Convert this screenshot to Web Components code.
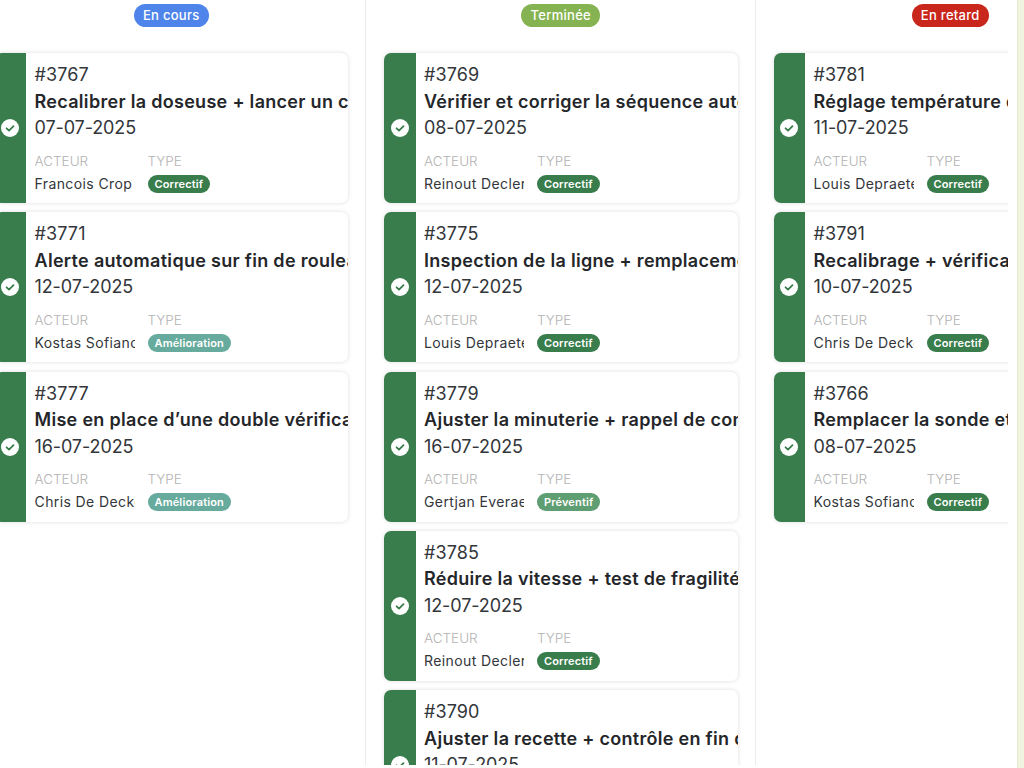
<!DOCTYPE html>
<html lang="fr">
<head>
<meta charset="utf-8">
<title>Tableau</title>
<style>
  html, body { margin: 0; padding: 0; background: #fff; }
  body { font-family: "Inter", "Liberation Sans", sans-serif; height: 768px; overflow: hidden; }
</style>
</head>
<body>
<template id="cardTpl">
  <style>
    :host { display: flex; height: 150px; background: #fff; border-radius: 7px; overflow: hidden; box-shadow: 0 0 4px rgba(0,0,0,.14); flex: none; }
    .band { flex: none; width: 31.5px; background: #387d4b; display: flex; align-items: center; justify-content: center; }
    .band svg { width: 18px; height: 18px; display: block; }
    .body { flex: 1; min-width: 0; padding: 9px 0 0 8.5px; color: #33363a; overflow: hidden; }
    .num, .date { font-size: 18px; line-height: 26.5px; white-space: nowrap; }
    .num { letter-spacing: .1px; }
    .date { letter-spacing: -.1px; }
    .title { font-size: 18px; line-height: 26.5px; font-weight: 600; white-space: nowrap; color: #24262a; letter-spacing: .3px; }
    .meta { display: flex; margin-top: 10px; }
    .col { flex: none; }
    .col:first-child { width: 100px; margin-right: 13px; overflow: hidden; }
    .lab { font-size: 13.5px; line-height: 19px; color: #b3b3b3; font-weight: 300; }
    .val { font-size: 14px; line-height: 24px; margin-top: 1px; white-space: nowrap; color: #33363a; letter-spacing: .4px; }
    .tag { display: inline-block; margin-top: 4px; padding: 0 7px; height: 18px; line-height: 18px; border-radius: 9px; color: #fff; font-size: 11px; font-weight: 600; letter-spacing: .15px; background: var(--tag, #387d4b); }
  </style>
  <div class="band">
    <svg viewBox="0 0 18 18"><circle cx="9" cy="9" r="9" fill="#fff"/><path d="M5.6 9.3l2.4 2.3 4.5-4.5" fill="none" stroke="#387d4b" stroke-width="1.8" stroke-linecap="round" stroke-linejoin="round"/></svg>
  </div>
  <div class="body">
    <div class="num"></div>
    <div class="title"></div>
    <div class="date"></div>
    <div class="meta">
      <div class="col"><div class="lab">ACTEUR</div><div class="val"></div></div>
      <div class="col"><div class="lab">TYPE</div><div class="tag"></div></div>
    </div>
  </div>
</template>

<kanban-board>
  <kanban-column label="En cours" color="#4f84ea">
    <task-card num="3767" title="Recalibrer la doseuse + lancer un contrôle" date="07-07-2025" actor="Francois Crop" type="Correctif"></task-card>
    <task-card num="3771" title="Alerte automatique sur fin de rouleau" date="12-07-2025" actor="Kostas Sofianos" type="Amélioration"></task-card>
    <task-card num="3777" title="Mise en place d’une double vérification" date="16-07-2025" actor="Chris De Decker" type="Amélioration"></task-card>
  </kanban-column>
  <kanban-column label="Terminée" color="#86b351">
    <task-card num="3769" title="Vérifier et corriger la séquence automatique" date="08-07-2025" actor="Reinout Declercq" type="Correctif"></task-card>
    <task-card num="3775" title="Inspection de la ligne + remplacement" date="12-07-2025" actor="Louis Depraetere" type="Correctif"></task-card>
    <task-card num="3779" title="Ajuster la minuterie + rappel de consigne" date="16-07-2025" actor="Gertjan Everaert" type="Préventif"></task-card>
    <task-card num="3785" title="Réduire la vitesse + test de fragilité" date="12-07-2025" actor="Reinout Declercq" type="Correctif"></task-card>
    <task-card num="3790" title="Ajuster la recette + contrôle en fin de cycle" date="11-07-2025" actor="Louis Depraetere" type="Correctif"></task-card>
  </kanban-column>
  <kanban-column label="En retard" color="#c9261c">
    <task-card num="3781" title="Réglage température du four principal" date="11-07-2025" actor="Louis Depraetere" type="Correctif"></task-card>
    <task-card num="3791" title="Recalibrage + vérification du capteur" date="10-07-2025" actor="Chris De Decker" type="Correctif"></task-card>
    <task-card num="3766" title="Remplacer la sonde et vérifier le signal" date="08-07-2025" actor="Kostas Sofianos" type="Correctif"></task-card>
  </kanban-column>
</kanban-board>

<script>
  class KanbanBoard extends HTMLElement {
    constructor() {
      super();
      this.attachShadow({mode: "open"}).innerHTML = `
        <style>
          :host { display: flex; height: 768px; background: #fff; }
          .view { width: 1008px; height: 765px; overflow: hidden; flex: none; }
          .cols { display: flex; margin-left: -23.2px; width: max-content; height: 100%; }
          .gap { width: 9px; flex: none; }
          .strip { flex: 1; background: #f0f4df; border-left: 1px solid #e6ebd0; }
        </style>
        <div class="view"><div class="cols"><slot></slot></div></div>
        <div class="gap"></div>
        <div class="strip"></div>`;
    }
  }

  class KanbanColumn extends HTMLElement {
    constructor() {
      super();
      this.attachShadow({mode: "open"}).innerHTML = `
        <style>
          :host { display: block; width: 389.5px; box-sizing: border-box; border-right: 1px solid #ececec; padding: 4px 17.3px 0 17.7px; }
          .head { height: 40px; margin-bottom: 9px; text-align: center; }
          .pill { display: inline-block; height: 23px; line-height: 23px; padding: 0 9px; border-radius: 12px; color: #fff; font-size: 13px; font-weight: 500; letter-spacing: .3px; }
          .list { display: flex; flex-direction: column; gap: 9.3px; }
        </style>
        <div class="head"><span class="pill"></span></div>
        <div class="list"><slot></slot></div>`;
      const pill = this.shadowRoot.querySelector(".pill");
      pill.textContent = this.getAttribute("label");
      pill.style.background = this.getAttribute("color");
    }
  }

  const tagColors = { "Correctif": "#387d4b", "Amélioration": "#66ab9d", "Préventif": "#5f9e72" };

  class TaskCard extends HTMLElement {
    constructor() {
      super();
      const root = this.attachShadow({mode: "open"});
      root.appendChild(document.getElementById("cardTpl").content.cloneNode(true));
      root.querySelector(".num").textContent = "#" + this.getAttribute("num");
      root.querySelector(".title").textContent = this.getAttribute("title");
      root.querySelector(".date").textContent = this.getAttribute("date");
      root.querySelector(".val").textContent = this.getAttribute("actor");
      const tag = root.querySelector(".tag");
      tag.textContent = this.getAttribute("type");
      tag.style.setProperty("--tag", tagColors[this.getAttribute("type")]);
    }
  }

  customElements.define("kanban-board", KanbanBoard);
  customElements.define("kanban-column", KanbanColumn);
  customElements.define("task-card", TaskCard);
</script>
</body>
</html>
